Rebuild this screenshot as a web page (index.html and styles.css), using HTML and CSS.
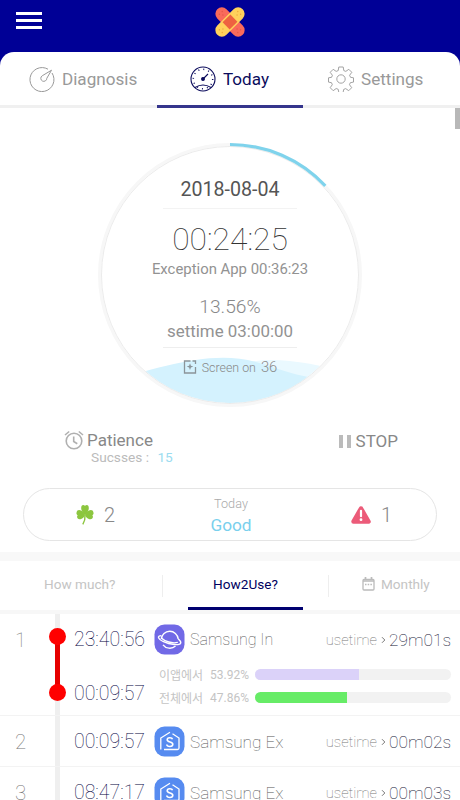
FILE: index.html
```html
<!DOCTYPE html>
<html lang="en">
<head>
    <meta charset="UTF-8">
    <meta name="viewport" content="width=device-width, initial-scale=1.0">
    <title>Today</title>
    <link rel="stylesheet" href="styles.css">
</head>
<body>
    <header>
        <button class="menu" aria-label="Menu"><span></span><span></span><span></span></button>
        <svg class="logo" width="32" height="32" viewBox="0 0 32 32">
            <g transform="rotate(45 16 16)">
                <rect x="-2" y="9.500" width="36" height="13" rx="6.500" fill="#f96a5b"/>
                <g fill="#e4564a">
                    <circle cx="3" cy="14" r=".7"/><circle cx="6" cy="16" r=".7"/><circle cx="3" cy="18" r=".7"/>
                    <circle cx="29" cy="14" r=".7"/><circle cx="26" cy="16" r=".7"/><circle cx="29" cy="18" r=".7"/>
                </g>
            </g>
            <g transform="rotate(-45 16 16)">
                <rect x="-2" y="9.500" width="36" height="13" rx="6.500" fill="#ffd15c"/>
                <rect x="10.500" y="11" width="11" height="10" fill="#ee6240"/>
                <g fill="#eda83c">
                    <circle cx="3" cy="14" r=".7"/><circle cx="6" cy="16" r=".7"/><circle cx="3" cy="18" r=".7"/>
                    <circle cx="29" cy="14" r=".7"/><circle cx="26" cy="16" r=".7"/><circle cx="29" cy="18" r=".7"/>
                </g>
            </g>
        </svg>
    </header>

    <nav class="tabs">
        <a class="tab" href="#diagnosis">
            <svg width="26" height="26" viewBox="0 0 26 26" fill="none" stroke="#999" stroke-width="1">
                <path d="M19 3.200A12 12 0 1 0 23 7"/>
                <path d="M22.500 4.200L17.800 12.300A3 3 0 1 1 13.200 9.800Z"/>
            </svg>
            <span>Diagnosis</span>
        </a>
        <a class="tab active" href="#today">
            <svg width="26" height="26" viewBox="0 0 26 26" fill="none" stroke="#0b0b5c" stroke-width="1.100">
                <circle cx="13" cy="13" r="12"/>
                <circle cx="13" cy="13" r="1.400" fill="#0b0b5c"/>
                <path d="M13 13L18 8M5 21.500Q13 16.500 21 21.500"/>
                <circle cx="13" cy="13" r="9.700" stroke-width="1.500" stroke-dasharray="1 4.080"/>
            </svg>
            <span>Today</span>
        </a>
        <a class="tab" href="#settings">
            <svg width="26" height="26" viewBox="0 0 26 26" fill="none" stroke="#999" stroke-width=".9">
                <path d="M10.800 1h4.400l.6 3.600 2 .8 3-2.100 3 3-2.200 3 .9 2 3 .5v4.300l-3.200.6-.8 2 2.200 3-3 3-3-2.100-2 .8-.6 3.100h-4.300l-.6-3.200-2-.8-3 2.200-3-3 2.100-3-.8-2-3-.6v-4.300l3.100-.5.8-2-2.200-3 3-3 3 2.100 2-.8z"/>
                <circle cx="13" cy="13" r="4.200"/>
            </svg>
            <span>Settings</span>
        </a>
    </nav>

    <main>
        <section class="gauge">
            <svg class="dial" width="270" height="270" viewBox="0 0 270 270" fill="none">
                <clipPath id="inner"><circle cx="135" cy="135" r="128"/></clipPath>
                <g clip-path="url(#inner)">
                    <path d="M130 231C162 213 200 219 262 234V270H130Z" fill="#eaf9ff"/>
                    <path d="M5 244C70 226 120 208 168 224S215 238 262 240V270H5Z" fill="#d4f2fe"/>
                </g>
                <circle cx="135" cy="135" r="130.500" stroke="#f7f7f7" stroke-width="3"/>
                <circle cx="135" cy="135" r="128.500" stroke="#e6e6e6" stroke-width=".8"/>
                <path d="M135 4.500A130.500 130.500 0 0 1 230.300 45.900" stroke="#7fd3ec" stroke-width="3.200"/>
            </svg>
            <div class="date">2018-08-04</div>
            <div class="total">00:24:25</div>
            <div class="exception">Exception App 00:36:23</div>
            <div class="percent">13.56%</div>
            <div class="settime">settime 03:00:00</div>
            <div class="screen-on">
                <svg width="14" height="14" viewBox="0 0 14 14" fill="none" stroke="#8b9499" stroke-width="1.300">
                    <path d="M7.500 1H1.500V13H12.500V7M12.500 4V1H9.500"/>
                    <path d="M7 3.200l.9 2.500 2.400.9-2.400.9L7 10l-.9-2.500-2.400-.9 2.400-.9z" fill="#8b9499" stroke="none"/>
                </svg>
                <span>Screen on</span>
                <b>36</b>
            </div>
        </section>

        <section class="actions">
            <div class="patience">
                <svg width="20" height="20" viewBox="0 0 20 20" fill="none" stroke="#b0b0b0" stroke-width="1.600">
                    <circle cx="10" cy="11" r="7.800"/>
                    <path d="M1 5L5.200 1.500M14.800 1.500L19 5M9.700 6.500v5l3.600 2.200"/>
                </svg>
                <span class="label">Patience</span>
                <p>Sucsses : <b>15</b></p>
            </div>
            <div class="stop"><i></i><i></i><span>STOP</span></div>
        </section>

        <section class="summary">
            <div class="score">
                <svg width="18" height="21" viewBox="0 0 18 21" fill="#8cc63f">
                    <path d="M9 11C4 7 4.500 1 7.200 1 8.500 1 9 2 9 2S9.500 1 10.800 1C13.500 1 14 7 9 11Z"/>
                    <path d="M9 10.500C5 4.500 1 5.500.7 8-.1 10 1 11 1.700 11.300.2 12.500 1.500 16 4.500 15.200 7 14.500 8.500 13 9 10.500Z"/>
                    <path d="M9 10.500C13 4.500 17 5.500 17.300 8 18.100 10 17 11 16.300 11.300 17.800 12.500 16.500 16 13.500 15.200 11 14.500 9.500 13 9 10.500Z"/>
                    <path d="M9 11Q9.500 16 6.800 20.300" fill="none" stroke="#8cc63f" stroke-width="1.400"/>
                </svg>
                <span>2</span>
            </div>
            <div class="state"><small>Today</small><strong>Good</strong></div>
            <div class="score">
                <svg width="20" height="18" viewBox="0 0 20 18">
                    <path d="M10 2.500L17.500 15.500H2.500Z" fill="#ec5b79" stroke="#ec5b79" stroke-width="4.500" stroke-linejoin="round"/>
                    <path d="M10 4.800v5.400" stroke="#fff" stroke-width="2.200" stroke-linecap="round"/>
                    <circle cx="10" cy="13.700" r="1.400" fill="#fff"/>
                </svg>
                <span>1</span>
            </div>
        </section>

        <nav class="subtabs">
            <a href="#howmuch">How much?</a>
            <a class="active" href="#how2use">How2Use?</a>
            <a href="#monthly">
                <svg width="13" height="14" viewBox="0 0 13 14" fill="none" stroke="#bbb" stroke-width="1.300">
                    <rect x="1" y="2.500" width="11" height="10.500" rx="1"/>
                    <path d="M1 4h11M3.500 0v3M9.500 0v3" stroke-width="1.700"/>
                    <path d="M3 7.500h7" stroke-dasharray="1.500 1.200"/>
                </svg>
                Monthly
            </a>
        </nav>

        <section class="list">
            <div class="row detail">
                <div class="num">1</div>
                <div class="track"><div class="span"></div></div>
                <div class="times"><span>23:40:56</span><span>00:09:57</span></div>
                <div class="usage">
                    <div class="app">
                        <svg width="31" height="31" viewBox="0 0 31 31" fill="none" stroke="#fff" stroke-width="1.400">
                            <rect x=".5" y=".5" width="30" height="30" rx="10" fill="#7169e6" stroke="none"/>
                            <path d="M7.300 15A8.500 8.500 0 0 1 24.200 14.800M9 20.800A8.500 8.500 0 0 0 21.500 22"/>
                            <path d="M7.300 11.600C3 11.800 3.500 14.800 9.500 17.700S26.800 22 26.800 18.700C26.800 17.200 25.500 16 24.200 14.800"/>
                            <path d="M7.300 14C11 17.500 18 19.800 23.800 18.400"/>
                        </svg>
                        <span class="name">Samsung In</span>
                        <span class="use">usetime</span>
                        <svg class="arrow" width="5" height="8" viewBox="0 0 5 8" fill="none" stroke="#777"><path d="M1 1.200L3.800 4 1 6.800"/></svg>
                        <span class="amount">29m01s</span>
                    </div>
                    <div class="meter"><span>이앱에서</span><span>53.92%</span><div class="bar"><div class="fill purple" style="width: 53%"></div></div></div>
                    <div class="meter"><span>전체에서</span><span>47.86%</span><div class="bar"><div class="fill green" style="width: 47%"></div></div></div>
                </div>
            </div>
            <div class="row">
                <div class="num">2</div>
                <div class="track"></div>
                <div class="times"><span>00:09:57</span></div>
                <div class="usage">
                    <div class="app">
                        <svg width="31" height="31" viewBox="0 0 31 31" fill="none" stroke="#fff" stroke-width="1.300">
                            <rect x=".5" y=".5" width="30" height="30" rx="10" fill="#568bf0" stroke="none"/>
                            <path d="M6.800 23.500V12L16 6.200M18.500 7.700L25 12V22q0 1.500-1.500 1.500H10"/>
                            <path d="M18.500 13.200C18 11.200 13.200 11 13.200 13.800 13.200 16.700 18.800 15.500 18.800 18.300 18.800 21.200 13 21 12.800 18.500" stroke-width="1.600"/>
                        </svg>
                        <span class="name">Samsung Ex</span>
                        <span class="use">usetime</span>
                        <svg class="arrow" width="5" height="8" viewBox="0 0 5 8" fill="none" stroke="#777"><path d="M1 1.200L3.800 4 1 6.800"/></svg>
                        <span class="amount">00m02s</span>
                    </div>
                </div>
            </div>
            <div class="row">
                <div class="num">3</div>
                <div class="track"></div>
                <div class="times"><span>08:47:17</span></div>
                <div class="usage">
                    <div class="app">
                        <svg width="31" height="31" viewBox="0 0 31 31" fill="none" stroke="#fff" stroke-width="1.300">
                            <rect x=".5" y=".5" width="30" height="30" rx="10" fill="#568bf0" stroke="none"/>
                            <path d="M6.800 23.500V12L16 6.200M18.500 7.700L25 12V22q0 1.500-1.500 1.500H10"/>
                            <path d="M18.500 13.200C18 11.200 13.200 11 13.200 13.800 13.200 16.700 18.800 15.500 18.800 18.300 18.800 21.200 13 21 12.800 18.500" stroke-width="1.600"/>
                        </svg>
                        <span class="name">Samsung Ex</span>
                        <span class="use">usetime</span>
                        <svg class="arrow" width="5" height="8" viewBox="0 0 5 8" fill="none" stroke="#777"><path d="M1 1.200L3.800 4 1 6.800"/></svg>
                        <span class="amount">00m03s</span>
                    </div>
                </div>
            </div>
        </section>
        <div class="scrollbar"></div>
    </main>
</body>
</html>
```
FILE: styles.css
```css
* {
    box-sizing: border-box;
}
body {
    font-family: Roboto, "Noto Sans CJK KR", sans-serif;
    margin: 0;
    height: 800px;
    overflow: hidden;
    background-color: #000096;
    color: #888;
}
a {
    color: inherit;
    text-decoration: none;
}
p {
    margin: 0;
}
svg {
    display: block;
    flex: none;
}
header {
    height: 52px;
    display: flex;
    justify-content: center;
    padding-top: 6px;
    position: relative;
}
.menu {
    position: absolute;
    left: 16px;
    top: 12px;
    width: 26px;
    padding: 0;
    border: 0;
    background: none;
    display: flex;
    flex-direction: column;
    gap: 4px;
}
.menu span {
    height: 3px;
    background-color: white;
}

/* main tabs */
.tabs {
    display: grid;
    grid-template-columns: 157px 146px 157px;
    height: 56px;
    background-color: white;
    border-radius: 14px 14px 0 0;
}
.tab {
    display: flex;
    align-items: center;
    gap: 7px;
    border-bottom: 3px solid #f0f0f0;
    font-size: 17.1px;
    color: #999;
    padding-left: 29px;
}
.tab.active {
    color: #0b0b5c;
    border-color: #35358c;
    padding-left: 33px;
}
.tab:last-child {
    padding-left: 25px;
}

main {
    position: relative;
    background-color: white;
    height: 692px;
}
.scrollbar {
    position: absolute;
    right: 0;
    top: 0;
    width: 5px;
    height: 21px;
    background-color: #b8b8b8;
}

/* dial */
.gauge {
    height: 314px;
    padding-top: 68px;
    position: relative;
    display: flex;
    flex-direction: column;
    align-items: center;
    white-space: nowrap;
}
.gauge div {
    position: relative;
}
.dial {
    position: absolute;
    left: 95px;
    top: 32px;
}
.date {
    width: 134px;
    height: 33px;
    line-height: 27px;
    text-align: center;
    font-size: 19.6px;
    color: #555;
    border-bottom: 1px solid #f3f3f3;
}
.total {
    height: 45px;
    line-height: 60px;
    font-size: 31.800px;
    font-weight: 100;
    color: #333;
}
.exception {
    height: 39px;
    line-height: 31px;
    font-size: 14.900px;
    color: #929292;
}
.percent {
    height: 26px;
    line-height: 27px;
    font-size: 19.200px;
    font-weight: 300;
}
.settime {
    width: 134px;
    height: 30px;
    line-height: 26px;
    display: flex;
    justify-content: center;
    font-size: 16.900px;
    color: #929292;
    border-bottom: 1px solid #eee;
    margin-top: -1px;
}
.screen-on {
    display: flex;
    align-items: center;
    height: 38px;
    font-size: 12.400px;
    font-weight: 300;
}
.screen-on b {
    font-size: 14.800px;
    font-weight: 300;
    margin-left: 5px;
}
.screen-on svg {
    margin-right: 5px;
}

.actions {
    display: flex;
    height: 66px;
    padding: 7px 62px 0 64px;
    justify-content: space-between;
}
.patience {
    display: grid;
    grid-template-columns: 20px auto;
    grid-template-rows: 21px 14px;
    column-gap: 3px;
    align-content: start;
    align-items: center;
}
.patience .label {
    font-size: 17px;
}
.patience p {
    grid-column: 2;
    padding-left: 4px;
    font-size: 13.700px;
    line-height: 14px;
    color: #bbb;
    white-space: nowrap;
}
.patience b {
    color: #9bdcf0;
    font-weight: 400;
    margin-left: 5px;
}
.stop {
    display: flex;
    align-items: center;
    height: 24px;
    font-size: 17px;
}
.stop i {
    width: 4px;
    height: 13px;
    margin-right: 4px;
    background-color: #bbb;
}
.stop span {
    margin-left: 1px;
}

.summary {
    height: 53px;
    margin: 0 23px;
    padding: 0 44px 0 52px;
    border: 1px solid #e5e5e5;
    border-radius: 27px;
    display: flex;
    align-items: center;
    justify-content: space-between;
}
.score {
    display: flex;
    align-items: center;
    gap: 10px;
    font-size: 20px;
    font-weight: 300;
}
.state {
    text-align: center;
    margin-right: 4px;
}
.state small, .state strong {
    display: block;
    font-weight: 300;
}
.state small {
    font-size: 12.700px;
    line-height: 18px;
    padding-top: 2px;
    color: #aaa;
}
.state strong {
    font-size: 17.300px;
    line-height: 24px;
    font-weight: 400;
    color: #79d0ed;
}

/* list tabs */
.subtabs {
    margin-top: 11px;
    height: 62px;
    border-top: 9px solid #f8f8f8;
    border-bottom: 4px solid #f7f7f7;
    display: grid;
    grid-template-columns: 188px 115px 157px;
    font-size: 13.600px;
    color: #c4c4c4;
}
.subtabs a {
    display: flex;
    align-items: center;
    justify-content: center;
    position: relative;
    padding-bottom: 3px;
}
.subtabs a:first-child {
    justify-content: flex-start;
    padding-left: 44px;
}
.subtabs a:first-child::after, .subtabs a:last-child::before {
    content: "";
    position: absolute;
    left: 162px;
    top: 14px;
    width: 1px;
    height: 22px;
    background-color: #eee;
}
.subtabs a:last-child::before {
    left: 25px;
}
.subtabs a:last-child {
    gap: 6px;
    justify-content: flex-start;
    padding-left: 59px;
}
.subtabs .active {
    color: #000060;
    border-bottom: 3px solid #000070;
    padding: 0;
}

.row {
    display: flex;
    height: 51px;
    border-bottom: 1px solid #f3f3f3;
}
.row.detail {
    height: 102px;
}
.num {
    width: 55px;
    padding-left: 15px;
    line-height: 52px;
    font-size: 20.500px;
    font-weight: 100;
    color: #777;
}
.track {
    width: 5px;
    background-color: #efefef;
}
.span {
    width: 5px;
    height: 56px;
    margin-top: 22px;
    background-color: #e60000;
    position: relative;
}
.span::before, .span::after {
    content: "";
    position: absolute;
    left: -6px;
    top: -8px;
    width: 17px;
    height: 17px;
    border-radius: 50%;
    background-color: #f00;
}
.span::after {
    top: 48px;
}
.times {
    width: 94px;
    padding-left: 14px;
    font-size: 19.500px;
    font-weight: 100;
    color: #000040;
}
.times span {
    display: block;
    height: 54px;
    line-height: 52px;
}
.detail .times span {
    line-height: 51px;
}
.usage {
    width: 297px;
}
.app {
    display: flex;
    align-items: center;
    height: 51px;
    font-weight: 100;
}
.name {
    margin-left: 5px;
    flex: 1;
    font-size: 17.200px;
    color: #555;
}
.detail .name {
    font-size: 16px;
}
.use {
    font-size: 14.800px;
    color: #777;
}
.arrow {
    margin: 0 3px 0 4px;
}
.amount {
    font-size: 17.300px;
    font-weight: 100;
    color: #111133;
}
.meter {
    display: grid;
    grid-template-columns: 51px 45px 196px;
    align-items: center;
    height: 23px;
    padding-left: 5px;
    margin-top: -2px;
    font-size: 12px;
    color: #c4c4c4;
}
.meter + .meter {
    margin-top: 0;
}
.bar {
    height: 11px;
    border-radius: 6px;
    background-color: #f2f2f2;
    overflow: hidden;
}
.fill {
    height: 100%;
}
.purple {
    background-color: #dbd2f9;
}
.green {
    background-color: #67ec67;
}
```
